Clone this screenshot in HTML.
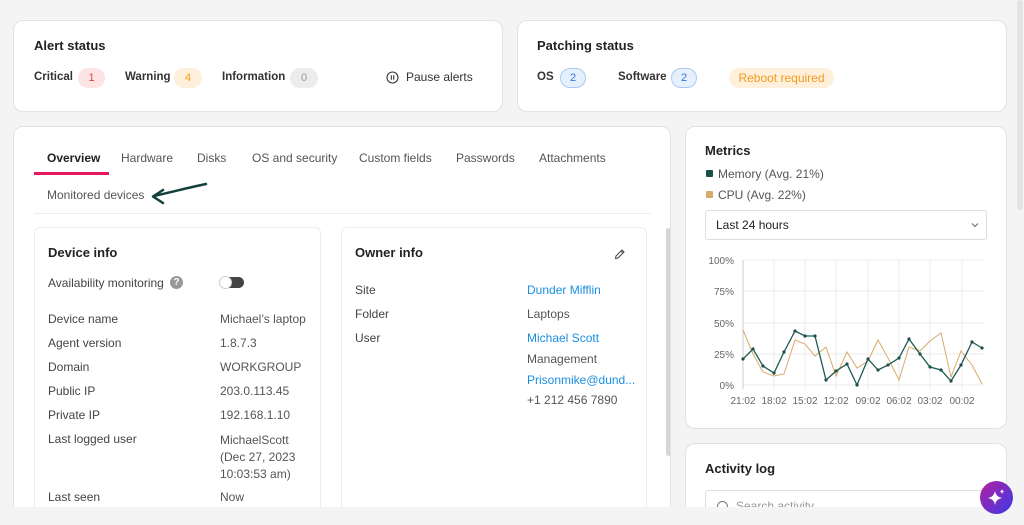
<!DOCTYPE html>
<html style="height:525px;overflow:hidden"><head><meta charset="utf-8"><style>
*{box-sizing:border-box;margin:0;padding:0}
body{width:1024px;height:525px;overflow:hidden;background:#f4f4f4;font-family:"Liberation Sans",sans-serif;color:#222;position:relative}
.card{position:absolute;background:#fff;border:1px solid #e2e2e2;border-radius:10px;overflow:hidden}
.a{position:absolute;white-space:nowrap}
h3{font-size:13px;font-weight:bold;color:#222}
.lbl{font-size:12px;color:#444}
.val{font-size:12px;color:#555}
.b{font-size:11.5px;font-weight:bold;color:#333}
.pill{position:absolute;height:20px;border-radius:10px;font-size:11px;text-align:center;line-height:20px}
.tab{font-size:12px;color:#555}
.link{color:#1a8fe0}
</style></head><body>

<div class="card" style="left:13px;top:20px;width:490px;height:92px">
<h3 class="a" style="left:20px;top:17px">Alert status</h3>
<span class="a b" style="left:20px;top:50px">Critical</span>
<div class="pill" style="left:64px;top:47px;width:27px;background:#fde4e4;color:#e04646">1</div>
<span class="a b" style="left:111px;top:50px">Warning</span>
<div class="pill" style="left:160px;top:47px;width:28px;background:#fff0dc;color:#f29a1a">4</div>
<span class="a b" style="left:208px;top:50px">Information</span>
<div class="pill" style="left:276px;top:47px;width:28px;background:#ececec;color:#999">0</div>
<svg class="a" style="left:372px;top:50px" width="13" height="13" viewBox="0 0 13 13"><circle cx="6.5" cy="6.5" r="5.5" fill="none" stroke="#333" stroke-width="1.1"/><path d="M5.3 4.3v4.4M7.7 4.3v4.4" stroke="#333" stroke-width="1.1"/></svg>
<span class="a" style="left:392px;top:49px;font-size:12px;color:#333">Pause alerts</span>
</div>

<div class="card" style="left:517px;top:20px;width:490px;height:92px">
<h3 class="a" style="left:19px;top:17px">Patching status</h3>
<span class="a b" style="left:19px;top:50px">OS</span>
<div class="pill" style="left:42px;top:47px;width:26px;background:#e6f0fd;border:1px solid #a9c9f3;color:#2d7ae0;line-height:18px">2</div>
<span class="a b" style="left:100px;top:50px">Software</span>
<div class="pill" style="left:153px;top:47px;width:26px;background:#e6f0fd;border:1px solid #a9c9f3;color:#2d7ae0;line-height:18px">2</div>
<div class="pill" style="left:211px;top:47px;width:105px;background:#fff0dc;color:#f29a1a;font-size:12px">Reboot required</div>
</div>

<div class="card" style="left:13px;top:126px;width:658px;height:399px">
<span class="a tab" style="left:33px;top:24px;color:#222;font-weight:bold">Overview</span>
<div class="a" style="left:20px;top:45px;width:75px;height:3px;background:#e8175d"></div>
<span class="a tab" style="left:107px;top:24px">Hardware</span>
<span class="a tab" style="left:183px;top:24px">Disks</span>
<span class="a tab" style="left:238px;top:24px">OS and security</span>
<span class="a tab" style="left:345px;top:24px">Custom fields</span>
<span class="a tab" style="left:442px;top:24px">Passwords</span>
<span class="a tab" style="left:525px;top:24px">Attachments</span>
<span class="a tab" style="left:33px;top:61px">Monitored devices</span>
<svg class="a" style="left:127px;top:50px" width="75" height="30" viewBox="140 176 75 30"><path d="M205 183 C190 186 175 190 153 195" fill="none" stroke="#12403a" stroke-width="2.5" stroke-linecap="round"/><path d="M162 189 L152 195.5 L162 202" fill="none" stroke="#12403a" stroke-width="2.5" stroke-linecap="round" stroke-linejoin="round"/></svg>
<div class="a" style="left:20px;top:86px;width:617px;height:1px;background:#eee"></div>
<div class="a" style="left:652px;top:101px;width:5px;height:228px;background:#d6d6d6;border-radius:3px"></div>

<div class="card" style="left:20px;top:100px;width:287px;height:290px;border-radius:6px;border-color:#ececec">
<h3 class="a" style="left:13px;top:17px">Device info</h3>
<span class="a lbl" style="left:13px;top:48px">Availability monitoring</span>
<div class="a" style="left:135px;top:48px;width:13px;height:13px;border-radius:50%;background:#999;color:#fff;font-size:10px;font-weight:bold;text-align:center;line-height:13px">?</div>
<div class="a" style="left:185px;top:49px;width:24px;height:11px;border-radius:6px;background:#444"></div>
<div class="a" style="left:184px;top:48px;width:13px;height:13px;border-radius:50%;background:#fff;border:1px solid #ccc"></div>
<span class="a lbl" style="left:13px;top:84px">Device name</span><span class="a val" style="left:185px;top:84px">Michael’s laptop</span>
<span class="a lbl" style="left:13px;top:108px">Agent version</span><span class="a val" style="left:185px;top:108px">1.8.7.3</span>
<span class="a lbl" style="left:13px;top:132px">Domain</span><span class="a val" style="left:185px;top:132px">WORKGROUP</span>
<span class="a lbl" style="left:13px;top:156px">Public IP</span><span class="a val" style="left:185px;top:156px">203.0.113.45</span>
<span class="a lbl" style="left:13px;top:180px">Private IP</span><span class="a val" style="left:185px;top:180px">192.168.1.10</span>
<span class="a lbl" style="left:13px;top:204px">Last logged user</span><span class="a val" style="left:185px;top:204px;line-height:17px">MichaelScott<br>(Dec 27, 2023<br>10:03:53 am)</span>
<span class="a lbl" style="left:13px;top:262px">Last seen</span><span class="a val" style="left:185px;top:262px">Now</span>
</div>

<div class="card" style="left:327px;top:100px;width:306px;height:290px;border-radius:6px;border-color:#ececec">
<h3 class="a" style="left:13px;top:17px">Owner info</h3>
<svg class="a" style="left:272px;top:21px" width="11" height="11" viewBox="0 0 11 11"><path d="M1.5 9.5l0.5-2.5 6-6 2 2-6 6z M7 2l2 2" fill="none" stroke="#444" stroke-width="1"/></svg>
<span class="a lbl" style="left:13px;top:55px">Site</span><span class="a val link" style="left:185px;top:55px">Dunder Mifflin</span>
<span class="a lbl" style="left:13px;top:79px">Folder</span><span class="a val" style="left:185px;top:79px">Laptops</span>
<span class="a lbl" style="left:13px;top:103px">User</span><span class="a val link" style="left:185px;top:103px">Michael Scott</span>
<span class="a val" style="left:185px;top:124px">Management</span>
<span class="a val link" style="left:185px;top:145px">Prisonmike@dund...</span>
<span class="a val" style="left:185px;top:165px">+1 212 456 7890</span>
</div>
</div>

<div class="card" style="left:685px;top:126px;width:322px;height:303px">
<h3 class="a" style="left:19px;top:16px">Metrics</h3>
<div class="a" style="left:20px;top:43px;width:7px;height:7px;background:#1d4f4a;border-radius:1px"></div>
<span class="a val" style="left:32px;top:40px">Memory (Avg. 21%)</span>
<div class="a" style="left:20px;top:64px;width:7px;height:7px;background:#d9aa6c;border-radius:1px"></div>
<span class="a val" style="left:32px;top:61px">CPU (Avg. 22%)</span>
<div class="a" style="left:19px;top:83px;width:282px;height:30px;border:1px solid #ddd;border-radius:3px"></div>
<span class="a" style="left:30px;top:91px;font-size:12px;color:#222">Last 24 hours</span>
<svg class="a" style="left:285px;top:95px" width="8" height="6" viewBox="0 0 8 6"><path d="M1 1.5l3 3 3-3" fill="none" stroke="#666" stroke-width="1"/></svg>
</div>
<svg class="a" style="left:0;top:0" width="1024" height="525">
<g stroke="#ebebeb" stroke-width="1">
<path d="M743 260H985M743 291H985M743 323H985M743 354H985M743 385H985"/>
<path d="M774 260V389M805 260V389M836 260V389M868 260V389M899 260V389M930 260V389M962 260V389"/>
</g>
<path d="M743 260V389" stroke="#ccc"/>
<g font-family="Liberation Sans" font-size="10" fill="#666" text-anchor="end">
<text x="734" y="264">100%</text><text x="734" y="295">75%</text><text x="734" y="327">50%</text><text x="734" y="358">25%</text><text x="734" y="389">0%</text>
</g>
<g font-family="Liberation Sans" font-size="10" fill="#666" text-anchor="middle">
<text x="743" y="404">21:02</text><text x="774" y="404">18:02</text><text x="805" y="404">15:02</text><text x="836" y="404">12:02</text><text x="868" y="404">09:02</text><text x="899" y="404">06:02</text><text x="930" y="404">03:02</text><text x="962" y="404">00:02</text>
</g>
<polyline fill="none" stroke="#d9aa6c" stroke-width="1" points="743,330 753,354 763,372 774,376 784,374 795,340 805,344 815,356 826,347 836,376 847,352 857,368 868,361 878,340 888,358 899,380 909,347 920,351 930,341 941,333 951,377 961,351 972,365 982,384"/>
<polyline fill="none" stroke="#1d5a54" stroke-width="1.3" points="743,359 753,349 763,366 774,373 784,352 795,331 805,336 815,336 826,380 836,371 847,364 857,385 868,359 878,370 888,365 899,358 909,339 920,354 930,367 941,370 951,381 961,365 972,342 982,348"/>
<g fill="#1d4f4a"><circle cx="743" cy="359" r="1.6"/><circle cx="753" cy="349" r="1.6"/><circle cx="763" cy="366" r="1.6"/><circle cx="774" cy="373" r="1.6"/><circle cx="784" cy="352" r="1.6"/><circle cx="795" cy="331" r="1.6"/><circle cx="805" cy="336" r="1.6"/><circle cx="815" cy="336" r="1.6"/><circle cx="826" cy="380" r="1.6"/><circle cx="836" cy="371" r="1.6"/><circle cx="847" cy="364" r="1.6"/><circle cx="857" cy="385" r="1.6"/><circle cx="868" cy="359" r="1.6"/><circle cx="878" cy="370" r="1.6"/><circle cx="888" cy="365" r="1.6"/><circle cx="899" cy="358" r="1.6"/><circle cx="909" cy="339" r="1.6"/><circle cx="920" cy="354" r="1.6"/><circle cx="930" cy="367" r="1.6"/><circle cx="941" cy="370" r="1.6"/><circle cx="951" cy="381" r="1.6"/><circle cx="961" cy="365" r="1.6"/><circle cx="972" cy="342" r="1.6"/><circle cx="982" cy="348" r="1.6"/></g>
</svg>

<div class="card" style="left:685px;top:443px;width:322px;height:82px">
<h3 class="a" style="left:19px;top:17px">Activity log</h3>
<div class="a" style="left:19px;top:46px;width:282px;height:30px;border:1px solid #ddd;border-radius:3px"></div>
<div class="a" style="left:31px;top:57px;width:11px;height:11px;border:1.3px solid #777;border-radius:50%"></div>
<span class="a" style="left:50px;top:55px;font-size:12px;color:#999">Search activity</span>
</div>

<div class="a" style="left:0;top:507px;width:1024px;height:18px;background:#f4f4f4"></div>
<div class="a" style="left:1017px;top:0;width:6px;height:210px;background:#e3e3e3;border-radius:3px"></div>
<div class="a" style="left:980px;top:481px;width:33px;height:33px;border-radius:50%;background:linear-gradient(135deg,#b520a0,#3a3ae8)"></div>
<svg class="a" style="left:980px;top:481px" width="33" height="33" viewBox="0 0 33 33"><path d="M15 10 Q16 16 22 17 Q16 18 15 24 Q14 18 8 17 Q14 16 15 10z" fill="#fff"/><path d="M22 8 Q22.4 10 24 10.5 Q22.4 11 22 13 Q21.6 11 20 10.5 Q21.6 10 22 8z" fill="#fff"/></svg>
</body></html>
